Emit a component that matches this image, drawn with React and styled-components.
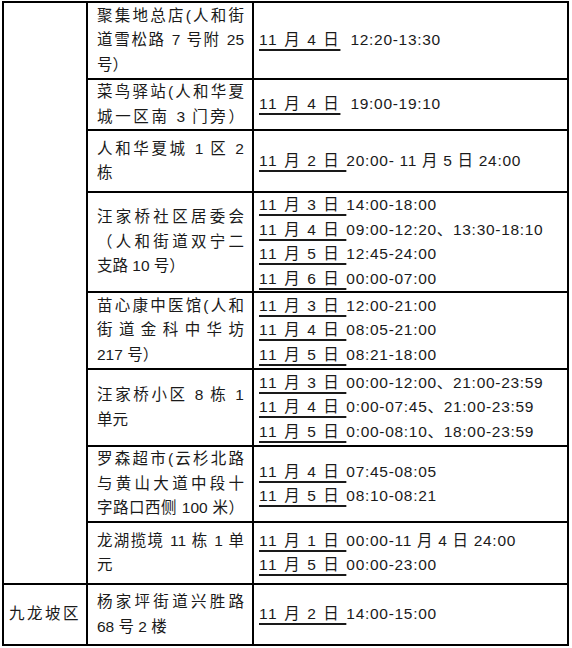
import React from "react";
import styled, { createGlobalStyle } from "styled-components";

const GlobalStyle = createGlobalStyle`
  html, body {
    margin: 0;
    padding: 0;
    background: #fff;
  }
  body {
    font-family: "Liberation Sans", "Noto Sans CJK SC", sans-serif;
    color: #1a1a1a;
  }
`;

const Table = styled.table`
  margin: 1px 0 0 2px;
  width: 565px;
  table-layout: fixed;
  border-collapse: collapse;
  font-size: 15.5px;
  line-height: 24.5px;
`;

const Cell = styled.td`
  border: 2px solid #000;
  vertical-align: middle;
  padding: ${(p) => p.$pad || "0 8px 0 9px"};
  height: ${(p) => (p.$h ? `${p.$h}px` : "auto")};
  box-sizing: border-box;
`;

const District = styled.div`
  letter-spacing: 2.5px;
  text-align: center;
`;

const Line = styled.span`
  display: block;
  white-space: pre;
  text-align: left;
  text-align-last: ${(p) => (p.$full ? "justify" : "left")};
`;

const Day = styled.span`
  text-decoration: underline;
  text-decoration-thickness: 2px;
  text-underline-offset: 4px;
  letter-spacing: 1.6px;
`;

const Time = styled.span`
  letter-spacing: 0.7px;
`;

const rows = [
  {
    h: 77,
    place: [
      ["聚集地总店(人和街", true],
      ["道雪松路 7 号附 25", true],
      ["号）", false],
    ],
    times: [["11 月 4 日", "  12:20-13:30"]],
  },
  {
    h: 51,
    place: [
      ["菜鸟驿站(人和华夏", true],
      ["城一区南 3 门旁）", true],
    ],
    times: [["11 月 4 日", "  19:00-19:10"]],
  },
  {
    h: 62,
    place: [
      ["人和华夏城 1 区 2", true],
      ["栋", false],
    ],
    times: [["11 月 2 日 ", "20:00- 11 月 5 日 24:00"]],
  },
  {
    h: 98,
    place: [
      ["汪家桥社区居委会", true],
      ["（人和街道双宁二", true],
      ["支路 10 号）", false],
    ],
    times: [
      ["11 月 3 日 ", "14:00-18:00"],
      ["11 月 4 日 ", "09:00-12:20、13:30-18:10"],
      ["11 月 5 日 ", "12:45-24:00"],
      ["11 月 6 日 ", "00:00-07:00"],
    ],
  },
  {
    h: 77,
    place: [
      ["苗心康中医馆(人和", true],
      ["街道金科中华坊", true],
      ["217 号）", false],
    ],
    times: [
      ["11 月 3 日 ", "12:00-21:00"],
      ["11 月 4 日 ", "08:05-21:00"],
      ["11 月 5 日 ", "08:21-18:00"],
    ],
  },
  {
    h: 77,
    place: [
      ["汪家桥小区 8 栋 1", true],
      ["单元", false],
    ],
    times: [
      ["11 月 3 日 ", "00:00-12:00、21:00-23:59"],
      ["11 月 4 日 ", "0:00-07:45、21:00-23:59"],
      ["11 月 5 日 ", "0:00-08:10、18:00-23:59"],
    ],
  },
  {
    h: 76,
    place: [
      ["罗森超市(云杉北路", true],
      ["与黄山大道中段十", true],
      ["字路口西侧 100 米）", true],
    ],
    times: [
      ["11 月 4 日 ", "07:45-08:05"],
      ["11 月 5 日 ", "08:10-08:21"],
    ],
  },
  {
    h: 62,
    place: [
      ["龙湖揽境 11 栋 1 单", true],
      ["元", false],
    ],
    times: [
      ["11 月 1 日 ", "00:00-11 月 4 日 24:00"],
      ["11 月 5 日 ", "00:00-23:00"],
    ],
  },
];

const last = {
  h: 61,
  place: [
    ["杨家坪街道兴胜路", true],
    ["68 号 2 楼", false],
  ],
  times: [["11 月 2 日 ", "14:00-15:00"]],
};

const Place = ({ lines }) =>
  lines.map(([text, full], i) => (
    <Line key={i} $full={full}>
      {text}
    </Line>
  ));

const Times = ({ lines }) =>
  lines.map(([day, time], i) => (
    <Line key={i}>
      <Day>{day}</Day>
      <Time>{time}</Time>
    </Line>
  ));

export default function App() {
  return (
    <>
      <GlobalStyle />
      <Table>
        <colgroup>
          <col style={{ width: 84 }} />
          <col style={{ width: 166 }} />
          <col style={{ width: 315 }} />
        </colgroup>
        <tbody>
          {rows.map((r, i) => (
            <tr key={i}>
              {i === 0 && <Cell rowSpan={rows.length} />}
              <Cell $h={r.h}>
                <Place lines={r.place} />
              </Cell>
              <Cell $h={r.h} $pad="0 4px 0 5px">
                <Times lines={r.times} />
              </Cell>
            </tr>
          ))}
          <tr>
            <Cell $pad="0 4px">
              <District>九龙坡区</District>
            </Cell>
            <Cell $h={last.h}>
              <Place lines={last.place} />
            </Cell>
            <Cell $h={last.h} $pad="0 4px 0 5px">
              <Times lines={last.times} />
            </Cell>
          </tr>
        </tbody>
      </Table>
    </>
  );
}
